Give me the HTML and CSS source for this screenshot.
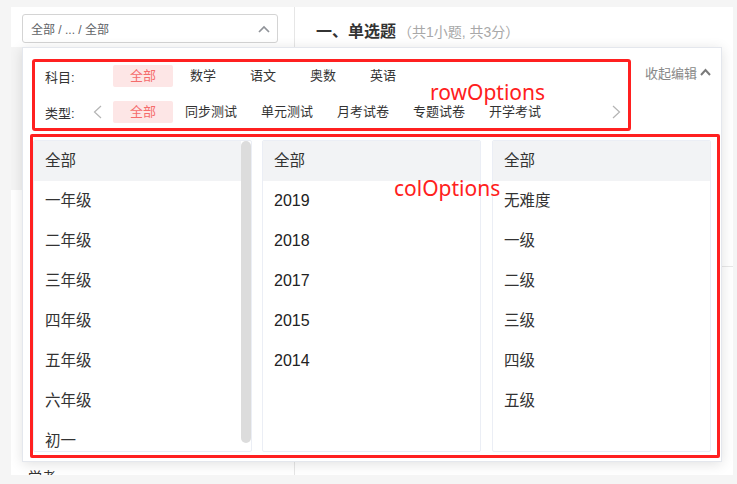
FILE: index.html
```html
<!DOCTYPE html>
<html lang="zh-CN">
<head>
<meta charset="utf-8">
<title>选择题</title>
<link rel="stylesheet" href="styles.css">
</head>
<body>
<div class="page">
  <div class="left">
    <div class="select">
      <span class="select-text">全部 / ... / 全部</span>
      <svg class="select-caret" width="12" height="8" viewBox="0 0 12 8"><path d="M1 7 L6 2 L11 7" fill="none" stroke="#909399" stroke-width="1.7"/></svg>
    </div>
    <div class="left-block"></div>
    <div class="left-list"><div class="left-item">学考</div></div>
  </div>
  <div class="divider"></div>
  <div class="right">
    <div class="q-head"><span class="q-title">一、单选题</span><span class="q-sub">（共1小题, 共3分）</span></div>
    <div class="q-body"></div>
  </div>

  <div class="popup">
    <div class="pop-top">
      <div class="row-box">
        <div class="opt-row">
          <span class="label label-wide">科目:</span>
          <div class="opts">
            <span class="opt active">全部</span>
            <span class="opt">数学</span>
            <span class="opt">语文</span>
            <span class="opt">奥数</span>
            <span class="opt">英语</span>
          </div>
        </div>
        <div class="opt-row">
          <span class="label">类型:</span>
          <span class="arrow arrow-left"><svg width="9" height="14" viewBox="0 0 9 14"><path d="M8 1 L1.5 7 L8 13" fill="none" stroke="#b4b4b4" stroke-width="1.2"/></svg></span>
          <div class="opts">
            <span class="opt active">全部</span>
            <span class="opt">同步测试</span>
            <span class="opt">单元测试</span>
            <span class="opt">月考试卷</span>
            <span class="opt">专题试卷</span>
            <span class="opt">开学考试</span>
          </div>
          <span class="arrow arrow-right"><svg width="9" height="14" viewBox="0 0 9 14"><path d="M1 1 L7.5 7 L1 13" fill="none" stroke="#b4b4b4" stroke-width="1.2"/></svg></span>
        </div>
      </div>
      <div class="collapse">收起编辑<svg width="11" height="8" viewBox="0 0 11 8"><path d="M1 7 L5.5 2 L10 7" fill="none" stroke="#7a7a7a" stroke-width="2"/></svg></div>
    </div>

    <div class="col-box">
      <div class="col col-1">
        <div class="col-list">
          <div class="item item-head">全部</div>
          <div class="item">一年级</div>
          <div class="item">二年级</div>
          <div class="item">三年级</div>
          <div class="item">四年级</div>
          <div class="item">五年级</div>
          <div class="item">六年级</div>
          <div class="item">初一</div>
        </div>
        <div class="scroll-track"><div class="scroll-thumb"></div></div>
      </div>
      <div class="col col-2">
        <div class="item item-head">全部</div>
        <div class="item num">2019</div>
        <div class="item num">2018</div>
        <div class="item num">2017</div>
        <div class="item num">2015</div>
        <div class="item num">2014</div>
      </div>
      <div class="col col-3">
        <div class="item item-head">全部</div>
        <div class="item">无难度</div>
        <div class="item">一级</div>
        <div class="item">二级</div>
        <div class="item">三级</div>
        <div class="item">四级</div>
        <div class="item">五级</div>
      </div>
    </div>

    <div class="note note-row">rowOptions</div>
    <div class="note note-col">colOptions</div>
  </div>
</div>
</body>
</html>
```
FILE: styles.css
```css
* { box-sizing: border-box; }
html, body {
  margin: 0;
  padding: 0;
  background: #f5f5f5;
  font-family: "Liberation Sans", "Noto Sans CJK SC", sans-serif;
  color: #333;
}
.page {
  position: relative;
  display: flex;
  margin: 7px 0 0 11px;
  width: 722px;
  height: 468px;
}
.left {
  width: 283px;
  height: 100%;
  background: #fff;
  overflow: hidden;
}
.select {
  display: flex;
  align-items: center;
  justify-content: space-between;
  margin: 7px 0 0 11px;
  width: 256px;
  height: 29px;
  border: 1px solid #d4d4d4;
  border-radius: 3px;
  padding: 0 7px 0 8px;
  background: #fff;
}
.select-text {
  font-size: 12px;
  color: #606266;
}
.left-block {
  margin-top: 4px;
  height: 143px;
  background: #f4f4f4;
}
.left-list { padding-left: 17px; }
.left-item {
  margin-top: 277px;
  font-size: 14px;
  line-height: 20px;
  color: #333;
}
.divider {
  width: 1px;
  height: 100%;
  background: #e6e6e6;
}
.right {
  width: 438px;
  height: 100%;
  background: #fff;
}
.q-head {
  height: 50px;
  line-height: 50px;
  padding-left: 21px;
}
.q-title {
  font-size: 16px;
  font-weight: bold;
  color: #333;
}
.q-sub {
  font-size: 14px;
  color: #a8a8a8;
  margin-left: 2px;
}
.q-body {
  height: 210px;
  border-bottom: 1px solid #e8e8e8;
}

/* popup */
.popup {
  position: absolute;
  left: 11px;
  top: 40px;
  width: 700px;
  height: 415px;
  background: #fff;
  border: 1px solid #e4e7ed;
  box-shadow: 0 2px 12px 0 rgba(0, 0, 0, 0.12);
  padding: 11px 0 0 9px;
}
.pop-top {
  display: flex;
  align-items: flex-start;
}
.row-box {
  width: 599px;
  height: 72px;
  border: 3px solid #ff2020;
  border-radius: 3px;
  padding: 3px 0 0 10px;
  display: flex;
  flex-direction: column;
  gap: 14px;
}
.opt-row {
  display: flex;
  align-items: center;
  height: 22px;
  font-size: 13px;
}
.label {
  width: 45px;
  color: #333;
}
.label-wide { width: 68px; }
.arrow {
  display: flex;
  align-items: center;
  width: 23px;
  height: 22px;
}
.arrow-left { padding-left: 3px; }
.arrow-right {
  margin-left: auto;
  width: 9px;
  margin-right: 7px;
}
.opts { display: flex; }
.opt {
  min-width: 60px;
  height: 22px;
  line-height: 22px;
  padding: 0 12px;
  text-align: center;
  color: #333;
  border-radius: 2px;
}
.opt.active {
  background: #fde6e6;
  color: #f56c6c;
}
.collapse {
  display: flex;
  align-items: center;
  margin: 3px 0 0 14px;
  height: 20px;
  font-size: 13px;
  color: #888;
  white-space: nowrap;
}
.collapse svg { margin-left: 3px; }

.col-box {
  display: flex;
  margin: 3px 0 0 -2px;
  width: 690px;
  height: 324px;
  border: 3px solid #ff2020;
  border-radius: 2px;
  padding-top: 3px;
}
.col {
  width: 219px;
  height: 312px;
  border: 1px solid #ebeef5;
  border-radius: 2px;
  overflow: hidden;
}
.col-1 { display: flex; }
.col-list {
  flex: 1;
  overflow: hidden;
}
.scroll-track {
  width: 10px;
  height: 100%;
  padding-bottom: 8px;
}
.scroll-thumb {
  height: 100%;
  background: #dcdcdc;
  border-radius: 5px;
}
.col-2 { margin-left: 10px; }
.col-3 { margin-left: 11px; }
.item {
  height: 40px;
  line-height: 40px;
  padding-left: 11px;
  font-size: 15.5px;
  color: #333;
}
.item.num { color: #222; font-size: 16px; }
.item-head { background: #f2f3f5; }

.note {
  position: absolute;
  font-family: "Noto Sans", sans-serif;
  font-size: 21px;
  line-height: 21px;
  color: #ff2020;
  white-space: nowrap;
}
.note-row { left: 407px; top: 34px; }
.note-col { left: 371px; top: 130px; }
```
